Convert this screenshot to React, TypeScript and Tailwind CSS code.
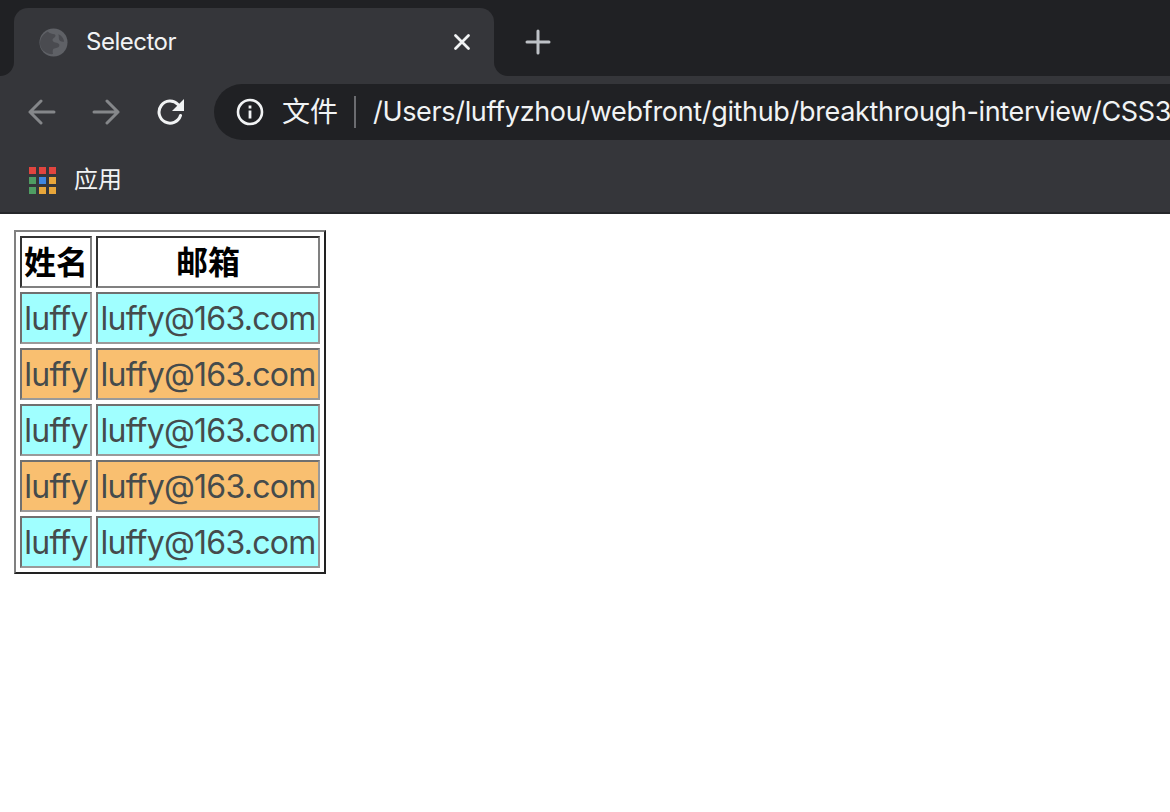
const rows = ["bg-[#a0ffff]", "bg-[#f9bf70]", "bg-[#a0ffff]", "bg-[#f9bf70]", "bg-[#a0ffff]"];

const thCls =
  "h-[52px] p-0 pt-[2px] border-2 border-t-[#333333] border-l-[#333333] border-r-[#808080] border-b-[#808080] text-[32px] leading-[46px] font-bold text-black text-center";
const tdCls =
  "h-[52px] p-0 pt-[2px] border-2 border-t-[#707070] border-l-[#707070] border-r-[#9a9a9a] border-b-[#9a9a9a] text-[32px] tracking-[-0.75px] leading-[46px] text-[#454b4c] text-center whitespace-nowrap";

function Globe() {
  return (
    <svg width="29" height="29" viewBox="0 0 30 30" fill="none">
      <circle cx="15" cy="15" r="14.500" fill="#5f6166" />
      <path d="M9 3.500c2 2.500 5 2 7 3 2 1.500 1 3-1 4-2 1.500-1 3.500 2 4.500 3 .5 4.500 1.500 4 3.500-1 2-3.500 2-6 3-1 1.500-1 3-.5 5.500-6 .5-11-3-13-8-1.500-6 1-12 7.500-15.500z" fill="#4a4b50" />
      <path d="M20 6.500c3 1 5.500 4 6 7.500-2 .5-4 0-5-1.500-1-2 0-4-1-6z" fill="#4a4b50" />
    </svg>
  );
}

function Apps() {
  const colors = ["#e2453f", "#e2453f", "#e2453f", "#4f9d63", "#3f86e0", "#e8a63a", "#4f9d63", "#e8a63a", "#e8a63a"];
  return (
    <div className="grid grid-cols-3 gap-[3px] w-[27px] h-[27px]">
      {colors.map((c, i) => (
        <svg key={i} width="7" height="7" viewBox="0 0 7 7">
          <rect width="7" height="7" fill={c} />
        </svg>
      ))}
    </div>
  );
}

export default function App() {
  return (
    <div className="w-[1170px] h-[812px] bg-white overflow-hidden font-['Inter','Noto_Sans_CJK_SC',sans-serif]">
      <header className="h-[214px] bg-[#35363a] border-b-2 border-[#26272a] flex flex-col">
        <div className="h-[76px] flex shrink-0">
          <div className="w-[14px] bg-[#202124] rounded-br-[14px]" />
          <div className="w-[480px] shrink-0 flex flex-col">
            <div className="h-[8px] bg-[#202124]" />
            <div className="flex-1 bg-[#202124]">
              <div className="h-full bg-[#35363a] rounded-t-[14px] flex items-center pl-[25px] pr-[22px]">
                <Globe />
                <span className="ml-[18px] text-[24px] tracking-[-0.5px] text-[#f1f3f4] flex-1">Selector</span>
                <svg width="20" height="20" viewBox="0 0 20 20" fill="none" stroke="#f1f3f4" strokeWidth="2.800" strokeLinecap="round">
                  <path d="M3.500 3.500 16.500 16.500M16.500 3.500 3.500 16.500" />
                </svg>
              </div>
            </div>
          </div>
          <div className="flex-1 bg-[#202124] rounded-bl-[14px] flex items-center pl-[31px] pt-[8px]">
            <svg width="26" height="26" viewBox="0 0 26 26" fill="none" stroke="#bdc1c6" strokeWidth="3" strokeLinecap="round">
              <path d="M13 2v22M2 13h22" />
            </svg>
          </div>
        </div>
        <div className="h-[72px] flex items-center pl-[28px] shrink-0">
          <svg width="28" height="26" viewBox="0 0 28 26" fill="none" stroke="#85878a" strokeWidth="3" strokeLinecap="round" strokeLinejoin="round">
            <path d="M26 13H2M13 2 2 13l11 11" />
          </svg>
          <svg className="ml-[36px]" width="28" height="26" viewBox="0 0 28 26" fill="none" stroke="#85878a" strokeWidth="3" strokeLinecap="round" strokeLinejoin="round">
            <path d="M2 13h24M15 2l11 11-11 11" />
          </svg>
          <svg className="ml-[37px]" width="28" height="28" viewBox="0 0 28 28" fill="none">
            <path d="M23.500 17.500A11 11 0 1 1 21 6.500" stroke="#f1f3f4" strokeWidth="3" strokeLinecap="round" />
            <path d="M27 1v12H15z" fill="#f1f3f4" />
          </svg>
          <div className="ml-[29px] flex-1 h-[56px] bg-[#202124] rounded-l-[28px] flex items-center pl-[22px] overflow-hidden">
            <svg className="shrink-0" width="28" height="28" viewBox="0 0 28 28" fill="none">
              <circle cx="14" cy="14" r="12" stroke="#f1f3f4" strokeWidth="2.600" />
              <rect x="12.600" y="12.500" width="2.800" height="8" fill="#f1f3f4" />
              <rect x="12.600" y="7.500" width="2.800" height="3" fill="#f1f3f4" />
            </svg>
            <span className="ml-[18px] text-[28px] text-[#f1f3f4] whitespace-nowrap">文件</span>
            <span className="ml-[16px] w-[2px] h-[32px] bg-[#6b6c70] shrink-0" />
            <span className="ml-[17px] text-[27px] tracking-[-0.33px] text-[#f1f3f4] whitespace-nowrap">/Users/luffyzhou/webfront/github/breakthrough-interview/CSS3</span>
          </div>
        </div>
        <div className="flex-1 flex items-center pl-[29px]">
          <Apps />
          <span className="ml-[18px] text-[24px] text-[#f1f3f4]">应用</span>
        </div>
      </header>
      <main className="pt-[16px] pl-[14px]">
        <table className="border-separate border-spacing-[4px] border-2 border-t-[#808080] border-l-[#808080] border-r-[#222222] border-b-[#222222]">
          <thead>
            <tr>
              <th className={`w-[72px] ${thCls}`}>姓名</th>
              <th className={`w-[224px] ${thCls}`}>邮箱</th>
            </tr>
          </thead>
          <tbody>
            {rows.map((bg, i) => (
              <tr key={i}>
                <td className={`${tdCls} ${bg}`}>luffy</td>
                <td className={`${tdCls} ${bg}`}>luffy@163.com</td>
              </tr>
            ))}
          </tbody>
        </table>
      </main>
    </div>
  );
}
